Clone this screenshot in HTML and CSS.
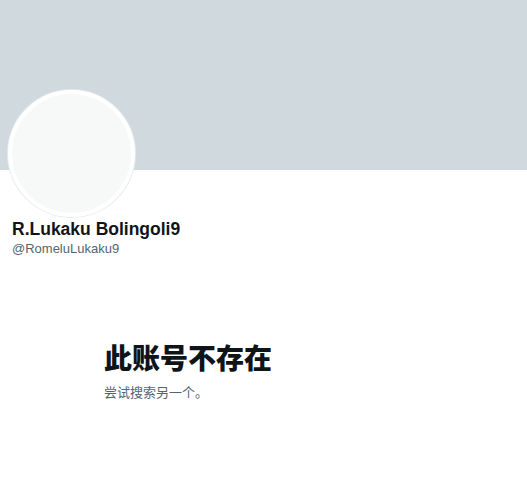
FILE: index.html
```html
<!DOCTYPE html>
<html lang="zh">
<head>
  <meta charset="UTF-8" />
  <title>R.Lukaku Bolingoli9</title>
  <link rel="stylesheet" href="styles.css">
</head>
<body>
  <div class="banner"></div>

  <div class="profile">
    <div class="avatar"></div>
    <div class="name">R.Lukaku Bolingoli9</div>
    <div class="handle">@RomeluLukaku9</div>
  </div>

  <div class="empty">
    <h2 class="empty-title">此账号不存在</h2>
    <p class="empty-text">尝试搜索另一个。</p>
  </div>
</body>
</html>
```

FILE: styles.css
```css
* {
  box-sizing: border-box;
}

body {
  margin: 0;
  background: #fff;
  color: #0f1419;
  font-family: "Liberation Sans", "Noto Sans CJK SC", sans-serif;
}

.banner {
  height: 170px;
  background-color: #cfd9de;
}

.profile {
  padding: 0 12px;
}

.avatar {
  width: 127px;
  height: 127px;
  margin: -80px 0 0 -4px;
  border-radius: 50%;
  background: #f7f9f9;
  border: 4px solid #fff;
  box-shadow: 0 0 0 1px #e6eaec;
}

.name {
  margin-top: 1px;
  font-size: 17.5px;
  font-weight: bold;
  line-height: 22px;
}

.handle {
  font-size: 13px;
  color: #536471;
  line-height: 18px;
}

.empty {
  padding: 81px 0 0 104px;
}

.empty-title {
  margin: 0;
  font-family: "Noto Sans CJK SC", sans-serif;
  font-size: 28px;
  font-weight: 800;
  line-height: 36px;
}

.empty-text {
  margin: 8px 0 0;
  font-family: "Noto Sans CJK SC", sans-serif;
  font-size: 13px;
  color: #536471;
  line-height: 18px;
}
```
